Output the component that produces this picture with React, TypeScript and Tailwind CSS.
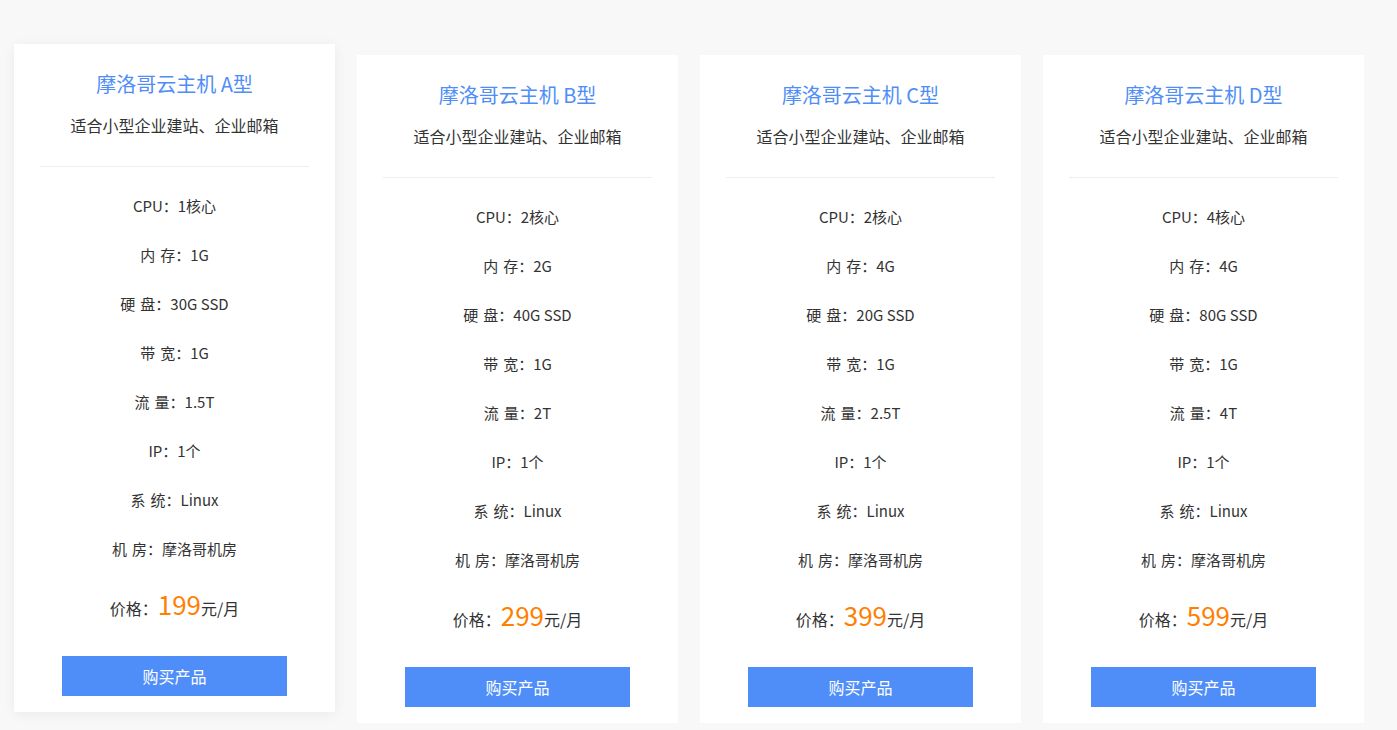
import React from "react";

type Plan = {
  name: string;
  cpu: string;
  mem: string;
  disk: string;
  bw: string;
  traffic: string;
  price: string;
};

const plans: Plan[] = [
  { name: "A型", cpu: "1核心", mem: "1G", disk: "30G SSD", bw: "1G", traffic: "1.5T", price: "199" },
  { name: "B型", cpu: "2核心", mem: "2G", disk: "40G SSD", bw: "1G", traffic: "2T", price: "299" },
  { name: "C型", cpu: "2核心", mem: "4G", disk: "20G SSD", bw: "1G", traffic: "2.5T", price: "399" },
  { name: "D型", cpu: "4核心", mem: "4G", disk: "80G SSD", bw: "1G", traffic: "4T", price: "599" },
];

export default function App() {
  return (
    <div
      className="min-h-screen bg-[#f8f8f8] pl-[14px] pt-[55px] text-[#333]"
      style={{ fontFamily: '"Noto Sans CJK SC", "Noto Sans", sans-serif' }}
    >
      <div className="flex items-start gap-[22px]">
        {plans.map((p, i) => (
          <PlanCard key={p.name} plan={p} raised={i === 0} />
        ))}
      </div>
    </div>
  );
}

function PlanCard({ plan, raised }: { plan: Plan; raised: boolean }) {
  const rows: [string, string][] = [
    ["CPU：", plan.cpu],
    ["内\u2004存：", plan.mem],
    ["硬\u2004盘：", plan.disk],
    ["带\u2004宽：", plan.bw],
    ["流\u2004量：", plan.traffic],
    ["IP：", "1个"],
    ["系\u2004统：", "Linux"],
    ["机\u2004房：", "摩洛哥机房"],
  ];

  return (
    <div
      className={
        raised
          ? "w-[321px] h-[668px] bg-white px-[26px] pt-[25px] text-center -translate-y-[11px] shadow-[0_2px_12px_rgba(0,0,0,0.06)]"
          : "w-[321px] h-[668px] bg-white px-[26px] pt-[25px] text-center"
      }
    >
      {/* HEADER */}
      <div className="border-b border-[#eeeeee] pb-[29px]">
        <h3 className="text-[20px] leading-[30px] font-normal text-[#4f8ef7]">
          摩洛哥云主机 {plan.name}
        </h3>
        <p className="mt-[14px] text-[16px] leading-[24px]">
          适合小型企业建站、企业邮箱
        </p>
      </div>

      {/* SPECS */}
      <ul className="mt-[14px]">
        {rows.map(([label, value]) => (
          <li key={label} className="text-[15px] leading-[49px]">
            {label}
            {value}
          </li>
        ))}
      </ul>

      {/* PRICE */}
      <div className="mt-[15px] flex h-[40px] items-baseline justify-center">
        <span className="text-[16px]">价格：</span>
        <span className="text-[26px] leading-[32px] text-[#ff8000]">{plan.price}</span>
        <span className="text-[16px]">元/月</span>
      </div>

      <button className="mt-[28px] h-[40px] w-[225px] bg-[#4f8ef9] text-[16px] text-white">
        购买产品
      </button>
    </div>
  );
}
